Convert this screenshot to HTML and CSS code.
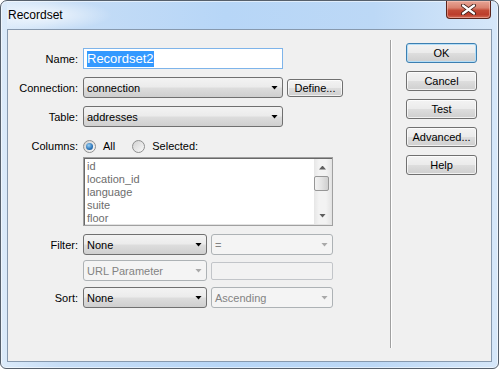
FILE: index.html
```html
<!DOCTYPE html>
<html lang="en">
<head>
  <meta charset="UTF-8">
  <meta name="viewport" content="width=device-width, initial-scale=1.0">
  <title>Recordset</title>
  <link rel="stylesheet" href="styles.css">
</head>
<body>
  <div id="window">
    <div class="titlebar">
      <span class="title">Recordset</span>
      <div class="closeButton">
        <svg width="17" height="11" viewBox="0 0 17 11">
          <path d="M3 1.5 L14 9.5 M14 1.5 L3 9.5" stroke="#3a1a14" stroke-width="4" stroke-linecap="round"/>
          <path d="M3 1.5 L14 9.5 M14 1.5 L3 9.5" stroke="#fff" stroke-width="2.2" stroke-linecap="round"/>
        </svg>
      </div>
    </div>

    <div class="client">
      <div class="form">
        <div class="row rowName">
          <label>Name:</label>
          <div class="textField focused"><span class="selection">Recordset2</span></div>
        </div>
        <div class="row rowConnection">
          <label>Connection:</label>
          <div class="combo wide">connection</div>
          <div class="button smallButton">Define...</div>
        </div>
        <div class="row rowTable">
          <label>Table:</label>
          <div class="combo wide">addresses</div>
        </div>
        <div class="row rowColumns">
          <label>Columns:</label>
          <span class="radio checked"></span><span class="radioText">All</span>
          <span class="radio second"></span><span class="radioText">Selected:</span>
        </div>
        <div class="row rowList">
          <div class="listBox">
            <div class="items">
              <div>id</div>
              <div>location_id</div>
              <div>language</div>
              <div>suite</div>
              <div>floor</div>
            </div>
            <div class="scrollbar">
              <div class="scrollArrow"><span class="arrowUp"></span></div>
              <div class="thumb"></div>
              <div class="track"></div>
              <div class="scrollArrow"><span class="arrowDown"></span></div>
            </div>
          </div>
        </div>
        <div class="row rowFilter">
          <label>Filter:</label>
          <div class="combo narrow">None</div>
          <div class="combo operator disabled">=</div>
        </div>
        <div class="row rowParam">
          <label></label>
          <div class="combo narrow disabled">URL Parameter</div>
          <div class="textField disabledField"></div>
        </div>
        <div class="row rowSort">
          <label>Sort:</label>
          <div class="combo narrow">None</div>
          <div class="combo operator disabled">Ascending</div>
        </div>
      </div>

      <div class="separator"></div>

      <div class="buttons">
        <div class="button default">OK</div>
        <div class="button">Cancel</div>
        <div class="button">Test</div>
        <div class="button">Advanced...</div>
        <div class="button">Help</div>
      </div>
    </div>
  </div>
</body>
</html>
```

FILE: styles.css
```css
body {
  margin: 0;
  font-family: "Liberation Sans", Arial, sans-serif;
  font-size: 11px;
  color: #000;
  background-color: #fff;
}
#window {
  width: 499px;
  height: 369px;
  box-sizing: border-box;
  border: 1px solid #56606c;
  border-radius: 7px 7px 6px 6px;
  padding: 0 6px 6px;
  display: flex;
  flex-direction: column;
  background: linear-gradient(to right, #dcebfa 0%, #c6ddf6 12%, #b7d6f7 45%, #bcd8f6 75%, #d6e7f9 100%);
  box-shadow: inset 0 0 0 1px rgba(255, 255, 255, 0.55);
}
.titlebar {
  height: 28px;
  display: flex;
  align-items: flex-start;
  background: radial-gradient(ellipse 70px 16px at 35px 14px, rgba(255, 255, 255, 0.75), rgba(255, 255, 255, 0));
}
.title {
  padding: 7px 0 0 1px;
  font-size: 12px;
  color: #000;
}
.closeButton {
  margin-left: auto;
  margin-right: 1px;
  width: 45px;
  height: 18px;
  box-sizing: border-box;
  border: 1px solid #5b241b;
  border-top: none;
  border-radius: 0 0 4px 4px;
  background: linear-gradient(#e7a596 0%, #d9826f 40%, #c34a36 55%, #bc3d2b 80%, #d26a55 100%);
  box-shadow: inset 0 0 0 1px rgba(255, 210, 200, 0.45);
  display: flex;
  align-items: center;
  justify-content: center;
}
.client {
  flex: 1;
  border: 1px solid #8799ae;
  background-color: #f0f0f0;
  display: flex;
}
.form {
  width: 382px;
  padding-top: 18px;
}
.row {
  display: flex;
  align-items: center;
}
.row label {
  width: 70px;
  margin-right: 5px;
  text-align: right;
  flex-shrink: 0;
}
.rowName { height: 21px; }
.rowConnection { height: 21px; margin-top: 8px; }
.rowTable { height: 21px; margin-top: 8px; }
.rowColumns { height: 14px; margin-top: 12px; }
.rowList { margin-top: 4px; padding-left: 75px; }
.rowFilter { height: 21px; margin-top: 8px; }
.rowParam { height: 21px; margin-top: 5px; }
.rowSort { height: 21px; margin-top: 6px; }

.textField {
  box-sizing: border-box;
  height: 21px;
  width: 200px;
  border: 1px solid #7eb4ea;
  background-color: #fff;
  padding-left: 3px;
  display: flex;
  align-items: center;
}
.selection {
  background-color: #3399ff;
  color: #fff;
  font-size: 13px;
  line-height: 16px;
  padding: 0 1px 0 0;
}
.disabledField {
  width: 122px;
  height: 18px;
  margin-left: 4px;
  border: 1px solid #c2c5c9;
  border-radius: 2px;
  background-color: #f2f2f2;
}

.combo {
  box-sizing: border-box;
  height: 21px;
  border: 1px solid #707070;
  border-radius: 3px;
  background: linear-gradient(#f3f3f3 0%, #ebebeb 48%, #dddddd 52%, #cfcfcf 100%);
  padding-left: 3px;
  display: flex;
  align-items: center;
  white-space: nowrap;
}
.combo::after {
  content: "";
  width: 7px;
  height: 4px;
  margin-left: auto;
  margin-right: 4px;
  background-color: #000;
  clip-path: polygon(0 0, 100% 0, 50% 100%);
}
.combo.wide { width: 200px; }
.combo.narrow { width: 124px; }
.combo.operator { width: 122px; margin-left: 4px; }
.combo.disabled {
  border-color: #adb2b5;
  background: #f4f4f4;
  color: #838383;
}
.combo.disabled::after {
  background-color: #a9a9a9;
}

.button {
  box-sizing: border-box;
  width: 71px;
  height: 20px;
  border: 1px solid #707070;
  border-radius: 3px;
  background: linear-gradient(#f3f3f3 0%, #ebebeb 48%, #dddddd 52%, #cfcfcf 100%);
  box-shadow: inset 0 0 0 1px rgba(255, 255, 255, 0.7);
  display: flex;
  align-items: center;
  justify-content: center;
  white-space: nowrap;
}
.smallButton {
  width: 56px;
  height: 18px;
  margin-left: 4px;
}
.button.default {
  border-color: #3c7fb1;
  box-shadow: inset 0 0 0 1px #b5def7;
}

.radio {
  box-sizing: border-box;
  width: 13px;
  height: 13px;
  border: 1px solid #8e8f8f;
  border-radius: 50%;
  background: linear-gradient(135deg, #d2d2d2, #f9f9f9);
  display: flex;
  align-items: center;
  justify-content: center;
}
.radio.checked::after {
  content: "";
  width: 7px;
  height: 7px;
  border-radius: 50%;
  background: radial-gradient(circle at 40% 35%, #9ad1f5, #2a73b7 60%, #1b4e84);
}
.radio.second {
  margin-left: 17px;
}
.radioText {
  margin-left: 7px;
}

.listBox {
  box-sizing: border-box;
  width: 250px;
  height: 69px;
  border: 1px solid #a0a0a0;
  box-shadow: inset 1px 1px 0 #696969, inset -1px -1px 0 #e3e3e3;
  background-color: #fff;
  padding: 1px;
  display: flex;
}
.items {
  flex: 1;
  padding: 1px 0 0 2px;
  line-height: 13px;
  color: #6d6d6d;
  overflow: hidden;
}
.scrollbar {
  width: 17px;
  display: flex;
  flex-direction: column;
  background: linear-gradient(to right, #e6e6e6, #f3f3f3 30%, #f3f3f3 70%, #e6e6e6);
}
.scrollArrow {
  height: 17px;
  display: flex;
  align-items: center;
  justify-content: center;
}
.arrowUp, .arrowDown {
  width: 7px;
  height: 4px;
  background-color: #5f5f5f;
}
.arrowUp {
  clip-path: polygon(50% 0, 100% 100%, 0 100%);
}
.arrowDown {
  clip-path: polygon(0 0, 100% 0, 50% 100%);
}
.thumb {
  box-sizing: border-box;
  height: 15px;
  width: 15px;
  border: 1px solid #979797;
  border-radius: 2px;
  background: linear-gradient(to right, #f2f2f2, #e4e4e4 50%, #cfcfcf);
}
.track {
  flex: 1;
}

.separator {
  width: 0;
  margin: 10px 0 13px;
  border-left: 1px solid #a0a0a0;
  border-right: 1px solid #ffffff;
}
.buttons {
  margin-left: 14px;
  padding-top: 13px;
  display: flex;
  flex-direction: column;
  gap: 8px;
}
```
